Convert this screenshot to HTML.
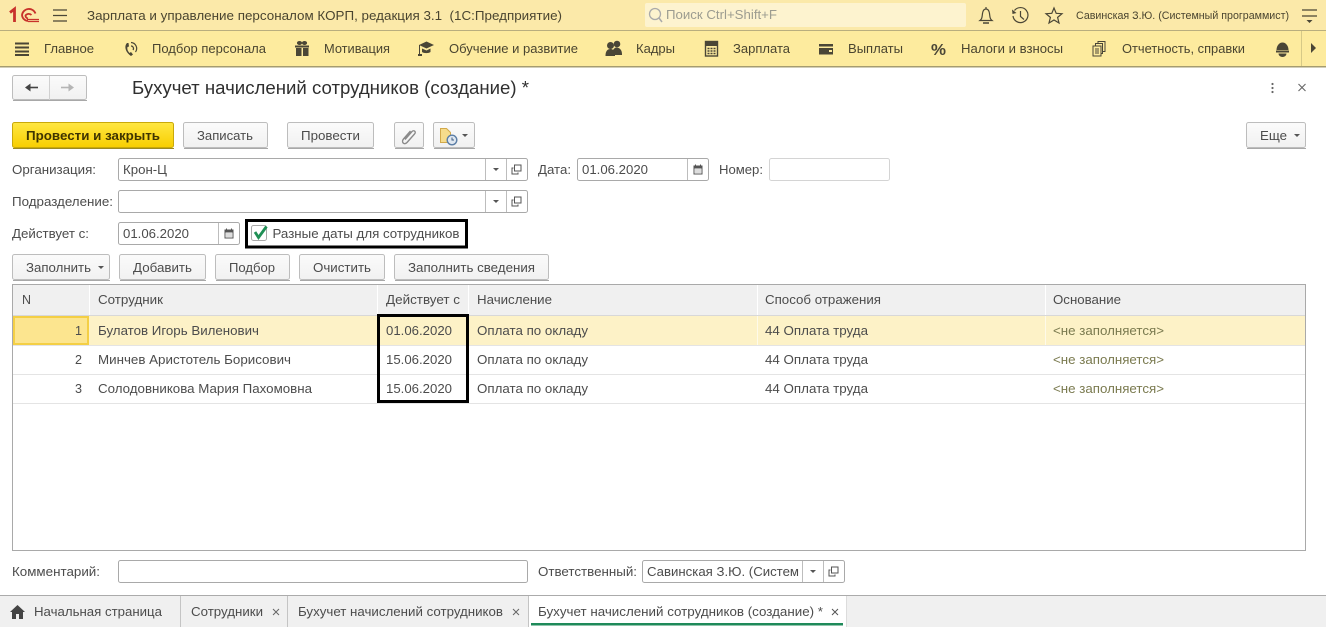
<!DOCTYPE html>
<html lang="ru"><head><meta charset="utf-8"><title>Бухучет начислений сотрудников</title>
<style>
html,body{margin:0;padding:0;background:#fff;overflow:hidden}
svg{display:block;font-family:"Liberation Sans",Arial,sans-serif}
text{font-size:13px;fill:#4c4c4c}
.m text{fill:#4a4530}
.ic{fill:#4a4636}
.st{fill:none;stroke:#4a4636;stroke-width:1.2}
.b{fill:url(#g);stroke:#bdbdbd}
.f{fill:#fff;stroke:#a9a9a9}
.d{stroke:#bdbdbd;stroke-width:1}
.n text{fill:#7a7a4f}
</style></head><body>
<svg xmlns="http://www.w3.org/2000/svg" width="1326" height="627" viewBox="0 0 1326 627">
<defs>
<linearGradient id="g" x1="0" y1="0" x2="0" y2="1"><stop offset="0" stop-color="#fbfbfb"/><stop offset="1" stop-color="#f1f1f1"/></linearGradient>
<linearGradient id="y" x1="0" y1="0" x2="0" y2="1"><stop offset="0" stop-color="#ffe742"/><stop offset="1" stop-color="#f8ce00"/></linearGradient>
<g id="arr"><path d="M0 0h6l-3 3z" fill="#555"/></g>
<g id="open"><path d="M-3.500 -1.500h-1.500v6h6v-1.500" fill="none" stroke="#555"/><rect x="-2.500" y="-4.500" width="6.500" height="6" fill="none" stroke="#555"/></g>
<g id="cal"><rect x="-4" y="-3.500" width="8" height="8" fill="none" stroke="#555"/><rect x="-4" y="-3.500" width="8" height="2.500" fill="#555"/><path d="M-2.500-5v2M2.500-5v2" stroke="#555"/><path d="M-2.500 0.500h5M-2.500 2.500h5" stroke="#777" stroke-dasharray="1 1"/></g>
</defs>

<!-- top bar -->
<rect width="1326" height="30" fill="#fbe9a9"/>
<rect y="30" width="1326" height="1" fill="#b9ae7e"/>
<rect y="31" width="1326" height="35" fill="#fdeb9e"/>
<rect y="66" width="1326" height="1.500" fill="#a59c70"/>

<!-- 1C logo -->
<g fill="none" stroke="#c8322b">
<path d="M10 12.500l4.500-3.500v13" stroke-width="2.800"/>
<path d="M35.500 13.500a7 7 0 0 0 -13.500 1.500a6.500 6.500 0 0 0 6 6" stroke-width="1.800"/>
<path d="M31.500 15a4 4 0 0 0 -6 .5a3 3 0 0 0 2.500 3" stroke-width="1.800"/>
<path d="M27 19.500h12M28 21.500h11" stroke-width="1.300"/>
</g>
<path d="M53 10h14M53 15.500h14M53 21h14" stroke="#4a4636" stroke-width="1.200"/>
<text x="87" y="20" textLength="475" lengthAdjust="spacingAndGlyphs" style="fill:#4a4530" xml:space="preserve">Зарплата и управление персоналом КОРП, редакция 3.1  (1С:Предприятие)</text>

<rect x="645" y="3" width="321" height="24" rx="2" fill="#fdf3cf"/>
<circle cx="655" cy="14" r="5.500" fill="none" stroke="#aaa" stroke-width="1.300"/><path d="M659 18l3 4" stroke="#aaa" stroke-width="1.500"/>
<text x="666" y="19" textLength="111" lengthAdjust="spacingAndGlyphs" style="fill:#9c9c90">Поиск Ctrl+Shift+F</text>

<!-- bell / history / star -->
<path class="st" d="M980 20.500c2-1.500 2-3 2.500-7 .4-3 1.500-4.500 3.500-4.500s3.100 1.500 3.500 4.500c.5 4 .5 5.500 2.500 7z"/><path d="M986 7v2" class="st"/><path d="M983 23h6" stroke="#4a4636" stroke-width="1.500"/>
<path class="st" d="M1014.500 10.500a7.500 7.500 0 1 1 -1.500 5.500"/><path d="M1012 9.500l.5 4.500 4-1z" class="ic"/><path class="st" d="M1020.500 11v5.500l3.500 3"/>
<path class="st" d="M1054 8l2.200 5.300 5.800.4-4.400 3.700 1.400 5.600-5-3-5 3 1.400-5.600-4.400-3.700 5.800-.4z"/>
<text x="1076" y="19" style="font-size:11px;fill:#4a4530" textLength="213" lengthAdjust="spacingAndGlyphs">Савинская З.Ю. (Системный программист)</text>
<path d="M1302 10h15M1302 16h15" stroke="#4a4636" stroke-width="1.200"/><path d="M1306.500 20h6l-3 3z" class="ic"/>

<!-- main menu -->
<g class="m">
<text x="44" y="53" textLength="50" lengthAdjust="spacingAndGlyphs">Главное</text>
<text x="152" y="53" textLength="114" lengthAdjust="spacingAndGlyphs">Подбор персонала</text>
<text x="324" y="53" textLength="66" lengthAdjust="spacingAndGlyphs">Мотивация</text>
<text x="449" y="53" textLength="129" lengthAdjust="spacingAndGlyphs">Обучение и развитие</text>
<text x="636" y="53" textLength="39" lengthAdjust="spacingAndGlyphs">Кадры</text>
<text x="733" y="53" textLength="57" lengthAdjust="spacingAndGlyphs">Зарплата</text>
<text x="848" y="53" textLength="55" lengthAdjust="spacingAndGlyphs">Выплаты</text>
<text x="961" y="53" textLength="102" lengthAdjust="spacingAndGlyphs">Налоги и взносы</text>
<text x="1122" y="53" textLength="123" lengthAdjust="spacingAndGlyphs">Отчетность, справки</text>
</g>
<path d="M15 43.500h14M15 47.500h14M15 51.500h14M15 55h14" stroke="#4a4636" stroke-width="2"/>
<path d="M127 43c-3 3-2 9 4 13l2-1.500-2-2.500-1.500 1c-2-2-2.500-4-2-6l1.500-.5-.5-3.500z" class="ic"/><path d="M131 42.500a6 6 0 0 1 4.500 9.500M131 46a2.500 2.500 0 0 1 2 4" fill="none" stroke="#4a4636" stroke-width="1.200"/>
<g class="ic"><rect x="296" y="48" width="5.500" height="8"/><rect x="303" y="48" width="5.500" height="8"/><rect x="295" y="45.500" width="14" height="2"/><ellipse cx="299.500" cy="43" rx="2.600" ry="2"/><ellipse cx="304.500" cy="43" rx="2.600" ry="2"/></g>
<g class="ic"><path d="M419 45l7.500-3.500 7.500 3.500-7.500 3.500z"/><path d="M422 48.500l4.500 2 4-2v3.500c-2 1.500-6.500 1.500-8.500 0z"/><path d="M419 45h1v9h2v2h-4v-2h1z"/></g>
<g class="ic"><circle cx="617" cy="44" r="3.300"/><circle cx="610.500" cy="45.500" r="3.500"/><path d="M605.500 56c0-5 2-7 5-7 1 0 2 .3 2.500 1 1-1.500 2-2.500 3.500-2.500 3 0 5.500 2.500 5.500 6.500v1h-7v1z"/></g>
<g><rect x="705.500" y="41.500" width="12" height="14.500" fill="#fdeb9e" stroke="#4a4636" stroke-width="1.400"/><rect x="706" y="42" width="11" height="4" class="ic"/><path d="M707.500 48.500h8M707.500 51h8M707.500 53.500h8" stroke="#4a4636" stroke-width="1.500" stroke-dasharray="2 1"/></g>
<g class="ic"><path d="M819 44h14v2.500h-14z"/><path d="M819 48h14v6.500h-14z M829 50v2h3v-2z" fill-rule="evenodd"/></g>
<text x="931" y="55" style="font-size:16px;font-weight:bold;fill:#4a4636" textLength="15" lengthAdjust="spacingAndGlyphs">%</text>
<g fill="none" stroke="#4a4636"><rect x="1093" y="46" width="8" height="10"/><path d="M1095.500 46v-2.500h7v10h-1.500M1098 43.500v-2h7v10h-2"/><path d="M1095 49h4M1095 51h4M1095 53h4"/></g>
<g class="ic"><path d="M1276.500 50a6 7.500 0 0 1 12 0z"/><rect x="1276" y="50.500" width="13" height="2"/><path d="M1278.500 53.500h8a4 3.500 0 0 1 -8 0z"/></g>
<rect x="1301" y="31" width="1" height="35" fill="#d6c987"/>
<path d="M1311 43v10l5-5z" class="ic"/>

<!-- back/forward -->
<rect x="12.500" y="75.500" width="74" height="24" rx="2" class="b"/>
<path d="M13 100.500h74" stroke="#a8a8a8"/>
<path d="M49.500 76v24" stroke="#d0d0d0"/>
<path d="M29 87.500h9" stroke="#444" stroke-width="1.600"/><path d="M25 87.500l5.500-4v8z" fill="#444"/>
<path d="M61 87.500h9" stroke="#b5b5b5" stroke-width="1.600"/><path d="M74 87.500l-5.500-4v8z" fill="#b5b5b5"/>
<text x="132" y="94" style="font-size:18px;fill:#2f2f2f" textLength="397" lengthAdjust="spacingAndGlyphs">Бухучет начислений сотрудников (создание) *</text>
<circle cx="1272.500" cy="84" r="1.100" fill="#666"/><circle cx="1272.500" cy="88" r="1.100" fill="#666"/><circle cx="1272.500" cy="92" r="1.100" fill="#666"/>
<path d="M1298.500 84l7 7M1305.500 84l-7 7" stroke="#666" stroke-width="1.100"/>

<!-- command bar -->
<rect x="12.500" y="122.500" width="161" height="25" rx="2" fill="url(#y)" stroke="#c9a90a"/>
<path d="M13 148.500h161" stroke="#9c8a20"/>
<text x="26" y="140" style="font-weight:bold;fill:#3f3500" textLength="134" lengthAdjust="spacingAndGlyphs">Провести и закрыть</text>
<rect x="183.500" y="122.500" width="84" height="25" rx="2" class="b"/><path d="M184 148.500h84" stroke="#a8a8a8"/>
<text x="197" y="140" textLength="56" lengthAdjust="spacingAndGlyphs">Записать</text>
<rect x="287.500" y="122.500" width="86" height="25" rx="2" class="b"/><path d="M288 148.500h86" stroke="#a8a8a8"/>
<text x="301" y="140" textLength="59" lengthAdjust="spacingAndGlyphs">Провести</text>
<rect x="394.500" y="122.500" width="29" height="25" rx="2" class="b"/><path d="M395 148.500h29" stroke="#a8a8a8"/>
<path d="M405 139.500l7-8c2-2 4.500 .5 2.500 2.500l-7.500 8.500c-3 3-6 -.5 -3.500 -3.500l7-8" fill="none" stroke="#8a8a8a" stroke-width="1.400"/>
<rect x="433.500" y="122.500" width="41" height="25" rx="2" class="b"/><path d="M434 148.500h41" stroke="#a8a8a8"/>
<path d="M440.500 128.500h6l4 4v10h-10z" fill="#f6dc8c" stroke="#d2a94a"/>
<circle cx="452" cy="140" r="4.800" fill="#dfe7f0" stroke="#5b7ea6" stroke-width="1.400"/><path d="M452 137.500v2.500h2" stroke="#3c5c85" fill="none"/>
<use href="#arr" x="462" y="134"/>
<rect x="1246.500" y="122.500" width="59" height="25" rx="2" class="b"/><path d="M1247 148.500h59" stroke="#a8a8a8"/>
<text x="1260" y="140" textLength="27" lengthAdjust="spacingAndGlyphs">Еще</text>
<use href="#arr" x="1294" y="134"/>

<!-- form row 1 -->
<text x="12" y="174" textLength="84" lengthAdjust="spacingAndGlyphs">Организация:</text>
<rect x="118.500" y="158.500" width="409" height="22" rx="2" class="f"/>
<path d="M485.500 159v21M506.500 159v21" class="d"/>
<text x="123" y="174" textLength="44" lengthAdjust="spacingAndGlyphs">Крон-Ц</text>
<use href="#arr" x="493" y="168"/><use href="#open" x="517" y="169.500"/>
<text x="538" y="174" textLength="33" lengthAdjust="spacingAndGlyphs">Дата:</text>
<rect x="577.500" y="158.500" width="131" height="22" rx="2" class="f"/>
<path d="M687.500 159v21" class="d"/>
<text x="582" y="174" textLength="66" lengthAdjust="spacingAndGlyphs">01.06.2020</text>
<use href="#cal" x="698" y="169.500"/>
<text x="719" y="174" textLength="44" lengthAdjust="spacingAndGlyphs">Номер:</text>
<rect x="769.500" y="158.500" width="120" height="22" rx="2" fill="#fff" stroke="#d4d4d4"/>

<!-- row 2 -->
<text x="12" y="206" textLength="101" lengthAdjust="spacingAndGlyphs">Подразделение:</text>
<rect x="118.500" y="190.500" width="409" height="22" rx="2" class="f"/>
<path d="M485.500 191v21M506.500 191v21" class="d"/>
<use href="#arr" x="493" y="200"/><use href="#open" x="517" y="201.500"/>

<!-- row 3 -->
<text x="12" y="238" textLength="77" lengthAdjust="spacingAndGlyphs">Действует с:</text>
<rect x="118.500" y="222.500" width="121" height="22" rx="2" class="f"/>
<path d="M218.500 223v21" class="d"/>
<text x="123" y="238" textLength="66" lengthAdjust="spacingAndGlyphs">01.06.2020</text>
<use href="#cal" x="229" y="233.500"/>
<rect x="246.500" y="220.500" width="220" height="26.500" fill="#fff" stroke="#000" stroke-width="3"/>
<rect x="251.500" y="225.500" width="15" height="15" rx="2" fill="#fff" stroke="#a9a9a9"/>
<path d="M255 232l3.500 5.500 8-11" fill="none" stroke="#1f8f55" stroke-width="2.800"/>
<text x="272.500" y="238" textLength="187" lengthAdjust="spacingAndGlyphs">Разные даты для сотрудников</text>

<!-- table buttons -->
<rect x="12.500" y="254.500" width="97" height="25" rx="2" class="b"/><path d="M13 280.500h97" stroke="#a8a8a8"/>
<text x="26" y="272" textLength="65" lengthAdjust="spacingAndGlyphs">Заполнить</text><use href="#arr" x="98" y="266"/>
<rect x="119.500" y="254.500" width="86" height="25" rx="2" class="b"/><path d="M120 280.500h86" stroke="#a8a8a8"/>
<text x="133" y="272" textLength="59" lengthAdjust="spacingAndGlyphs">Добавить</text>
<rect x="215.500" y="254.500" width="74" height="25" rx="2" class="b"/><path d="M216 280.500h74" stroke="#a8a8a8"/>
<text x="229" y="272" textLength="46" lengthAdjust="spacingAndGlyphs">Подбор</text>
<rect x="299.500" y="254.500" width="85" height="25" rx="2" class="b"/><path d="M300 280.500h85" stroke="#a8a8a8"/>
<text x="313" y="272" textLength="58" lengthAdjust="spacingAndGlyphs">Очистить</text>
<rect x="394.500" y="254.500" width="154" height="25" rx="2" class="b"/><path d="M395 280.500h154" stroke="#a8a8a8"/>
<text x="408" y="272" textLength="127" lengthAdjust="spacingAndGlyphs">Заполнить сведения</text>

<!-- table -->
<rect x="12.500" y="284.500" width="1293" height="266" fill="#fff" stroke="#a9a9a9"/>
<rect x="13" y="285" width="1292" height="30" fill="#f0f0f0"/>
<path d="M89.500 285v30M377.500 285v30M468.500 285v30M757.500 285v30M1045.500 285v30" stroke="#fff"/>
<path d="M13 315.500h1292" stroke="#d8d8d8"/>
<text x="22" y="304" textLength="9" lengthAdjust="spacingAndGlyphs">N</text>
<text x="98" y="304" textLength="65" lengthAdjust="spacingAndGlyphs">Сотрудник</text>
<text x="386" y="304" textLength="74" lengthAdjust="spacingAndGlyphs">Действует с</text>
<text x="477" y="304" textLength="75" lengthAdjust="spacingAndGlyphs">Начисление</text>
<text x="765" y="304" textLength="116" lengthAdjust="spacingAndGlyphs">Способ отражения</text>
<text x="1053" y="304" textLength="68" lengthAdjust="spacingAndGlyphs">Основание</text>

<rect x="13" y="316" width="1292" height="29" fill="#fdf2c7"/>
<path d="M468.500 316v29M757.500 316v29M1045.500 316v29" stroke="#fff" stroke-opacity=".6"/>
<rect x="14" y="317" width="74" height="27" fill="#fce58f" stroke="#f4cf45" stroke-width="2"/>
<path d="M13 345.500h1292M13 374.500h1292M13 403.500h1292" stroke="#e4e4e4"/>

<text x="75" y="335" textLength="7" lengthAdjust="spacingAndGlyphs">1</text>
<text x="75" y="364" textLength="7" lengthAdjust="spacingAndGlyphs">2</text>
<text x="75" y="393" textLength="7" lengthAdjust="spacingAndGlyphs">3</text>
<text x="98" y="335" textLength="161" lengthAdjust="spacingAndGlyphs">Булатов Игорь Виленович</text>
<text x="98" y="364" textLength="193" lengthAdjust="spacingAndGlyphs">Минчев Аристотель Борисович</text>
<text x="98" y="393" textLength="214" lengthAdjust="spacingAndGlyphs">Солодовникова Мария Пахомовна</text>
<text x="386" y="335" textLength="66" lengthAdjust="spacingAndGlyphs">01.06.2020</text>
<text x="386" y="364" textLength="66" lengthAdjust="spacingAndGlyphs">15.06.2020</text>
<text x="386" y="393" textLength="66" lengthAdjust="spacingAndGlyphs">15.06.2020</text>
<text x="477" y="335" textLength="111" lengthAdjust="spacingAndGlyphs">Оплата по окладу</text>
<text x="477" y="364" textLength="111" lengthAdjust="spacingAndGlyphs">Оплата по окладу</text>
<text x="477" y="393" textLength="111" lengthAdjust="spacingAndGlyphs">Оплата по окладу</text>
<text x="765" y="335" textLength="103" lengthAdjust="spacingAndGlyphs">44 Оплата труда</text>
<text x="765" y="364" textLength="103" lengthAdjust="spacingAndGlyphs">44 Оплата труда</text>
<text x="765" y="393" textLength="103" lengthAdjust="spacingAndGlyphs">44 Оплата труда</text>
<g class="n">
<text x="1053" y="335" textLength="111" lengthAdjust="spacingAndGlyphs">&lt;не заполняется&gt;</text>
<text x="1053" y="364" textLength="111" lengthAdjust="spacingAndGlyphs">&lt;не заполняется&gt;</text>
<text x="1053" y="393" textLength="111" lengthAdjust="spacingAndGlyphs">&lt;не заполняется&gt;</text>
</g>
<rect x="378.500" y="315.500" width="89" height="86" fill="none" stroke="#000" stroke-width="3"/>

<!-- bottom form -->
<text x="12" y="576" textLength="88" lengthAdjust="spacingAndGlyphs">Комментарий:</text>
<rect x="118.500" y="560.500" width="409" height="22" rx="2" class="f"/>
<text x="538" y="576" textLength="99" lengthAdjust="spacingAndGlyphs">Ответственный:</text>
<rect x="642.500" y="560.500" width="202" height="22" rx="2" class="f"/>
<path d="M802.500 561v21M823.500 561v21" class="d"/>
<text x="647" y="576" textLength="152" lengthAdjust="spacingAndGlyphs">Савинская З.Ю. (Систем</text>
<use href="#arr" x="810" y="570"/><use href="#open" x="834" y="571.500"/>

<!-- tabs -->
<rect y="595" width="1326" height="32" fill="#f0f0f0"/>
<path d="M0 595.500h1326" stroke="#ababab"/>
<rect x="529" y="596" width="317" height="31" fill="#fff"/>
<path d="M180.500 596v31M287.500 596v31M528.500 596v31" stroke="#c4c4c4"/>
<path d="M846.500 596v31" stroke="#dcdcdc"/>
<rect x="531" y="623" width="312" height="2.500" fill="#1f8a5a"/>
<path d="M10 612l7.500-7 7.500 7h-2v7h-4v-5h-3v5h-4v-7z" fill="#444"/>
<text x="34" y="616" textLength="128" lengthAdjust="spacingAndGlyphs">Начальная страница</text>
<text x="191" y="616" textLength="72" lengthAdjust="spacingAndGlyphs">Сотрудники</text>
<path d="M273 609l6 6M279 609l-6 6" stroke="#666"/>
<text x="298" y="616" textLength="205" lengthAdjust="spacingAndGlyphs">Бухучет начислений сотрудников</text>
<path d="M513 609l6 6M519 609l-6 6" stroke="#666"/>
<text x="538" y="616" textLength="285" lengthAdjust="spacingAndGlyphs">Бухучет начислений сотрудников (создание) *</text>
<path d="M832 609l6 6M838 609l-6 6" stroke="#555"/>
</svg>
</body></html>
